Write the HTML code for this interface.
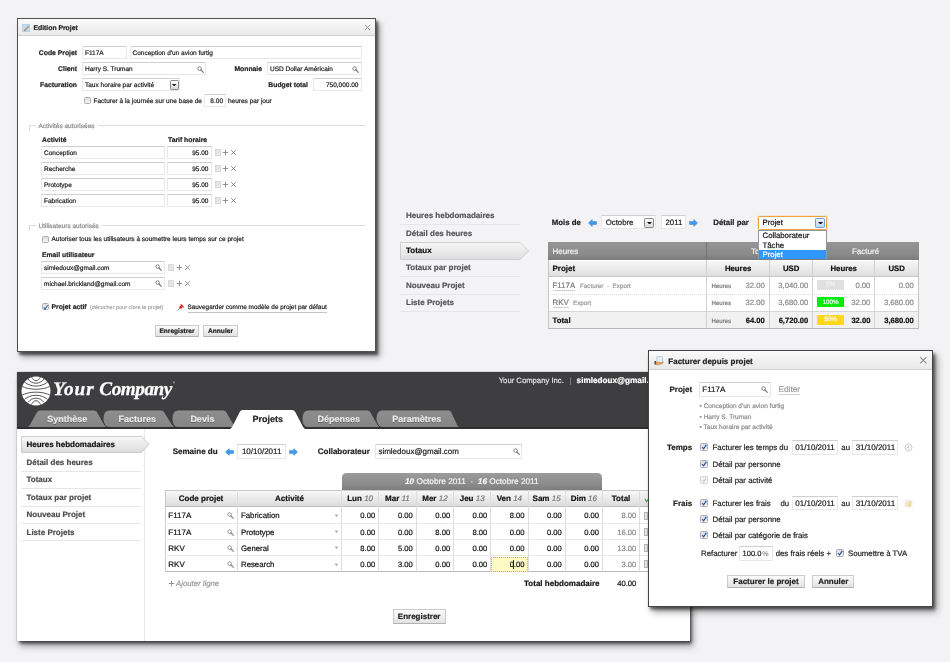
<!DOCTYPE html>
<html lang="fr">
<head>
<meta charset="utf-8">
<title>Your Company</title>
<style>
*{box-sizing:border-box;margin:0;padding:0}
html,body{width:950px;height:662px;overflow:hidden}
body{background:#f3f3f6;font-family:"Liberation Sans",Arial,sans-serif;font-size:6.5px;color:#222;position:relative;-webkit-font-smoothing:antialiased;text-rendering:geometricPrecision;-webkit-text-stroke:0.2px}
.abs{position:absolute}
.t{position:absolute;white-space:nowrap;line-height:1}
.b{font-weight:bold;font-size:6.8px}
.r{text-align:right}
.in{position:absolute;background:#fff;border:1px solid #e8e8e8;border-top-color:#d0d0d0;height:12px;line-height:10px;padding:0 2px;white-space:nowrap;font-size:6.5px;color:#1c1c1c;overflow:hidden}
.dlg{position:absolute;background:#fff;border:1px solid #444;box-shadow:2px 2.5px 2.5px rgba(0,0,0,.55),3.5px 4.5px 6px rgba(0,0,0,.35)}
.dlg .tb{position:absolute;left:0;right:0;top:0;height:16px;background:linear-gradient(#fafafa,#e9e9e9);border-bottom:1px solid #cfcfcf}
.cb{position:absolute;width:7px;height:7px;border:1px solid #a9adb3;background:linear-gradient(#dedee2,#f4f4f6);border-radius:1.5px}
.btn{position:absolute;height:12.5px;border:1px solid #cbcbcb;border-bottom-color:#b2b2b2;padding-top:1.1px;background:linear-gradient(#fbfbfb,#e2e2e2);font-weight:bold;font-size:6.6px;line-height:10px;text-align:center;color:#222;white-space:nowrap}
</style>
</head>
<body>
<div id="root" style="position:absolute;left:0;top:0;width:950px;height:662px;will-change:transform">
<div class="dlg" style="left:16.5px;top:18px;width:359.5px;height:334px;border-color:#505050"><div class="tb" style="height:17px"></div></div>
<svg class="abs" style="left:22px;top:24px" width="8" height="8" viewBox="0 0 8 8"><rect x="0.5" y="0.5" width="7" height="7" fill="#b9def8" stroke="#8fb9dd" stroke-width="0.8" stroke-dasharray="1.2 0.8"/><path d="M2.6 6.4L7 2" stroke="#c9925a" stroke-width="1.5"/><path d="M2 7L3.2 6.6L2.4 5.8Z" fill="#665"/></svg>
<div class="t b" style="top:23.80px;line-height:10px;left:33.50px;font-size:6.8px;color:#222">Edition Projet</div>
<svg class="abs" style="left:364.00px;top:23.80px" width="7" height="7" viewBox="0 0 8 8"><path d="M1 1L7 7M7 1L1 7" stroke="#8a8a8a" stroke-width="1" fill="none"/></svg>
<div class="t b" style="top:49.30px;line-height:10px;right:873.00px;text-align:right;">Code Projet</div>
<div class="in " style="left:82.00px;top:46.30px;width:44.50px;height:12.6px;line-height:10.6px;"><span style="position:relative;top:2.10px">F117A</span></div>
<div class="in " style="left:129.50px;top:46.30px;width:232.00px;height:12.6px;line-height:10.6px;"><span style="position:relative;top:2.10px">Conception d'un avion furtig</span></div>
<div class="t b" style="top:65.30px;line-height:10px;right:873.00px;text-align:right;">Client</div>
<div class="in " style="left:82.00px;top:62.30px;width:124.00px;height:12.6px;line-height:10.6px;"><span style="position:relative;top:2.10px">Harry S. Truman</span></div>
<svg class="abs" style="left:196.50px;top:65.80px" width="7" height="7" viewBox="0 0 7 7"><circle cx="2.6" cy="2.6" r="1.8" fill="none" stroke="#777" stroke-width="0.9"/><path d="M4 4L6.3 6.3" stroke="#777" stroke-width="1.2" stroke-linecap="round"/></svg>
<div class="t b" style="top:65.30px;line-height:10px;right:688.00px;text-align:right;">Monnaie</div>
<div class="in " style="left:267.00px;top:62.30px;width:94.50px;height:12.6px;line-height:10.6px;"><span style="position:relative;top:2.10px">USD Dollar Américain</span></div>
<svg class="abs" style="left:352.00px;top:65.80px" width="7" height="7" viewBox="0 0 7 7"><circle cx="2.6" cy="2.6" r="1.8" fill="none" stroke="#777" stroke-width="0.9"/><path d="M4 4L6.3 6.3" stroke="#777" stroke-width="1.2" stroke-linecap="round"/></svg>
<div class="t b" style="top:81.30px;line-height:10px;right:873.00px;text-align:right;">Facturation</div>
<div class="in " style="left:82.00px;top:78.30px;width:98.00px;height:12.6px;line-height:10.6px;"><span style="position:relative;top:2.10px">Taux horaire par activité</span></div>
<div class="abs" style="left:170.00px;top:80.20px;width:8.80px;height:9.40px;border:1px solid #8a8a8a;background:linear-gradient(#fdfdfd,#d9d9d9);border-radius:1.2px"></div><svg class="abs" style="left:172.20px;top:83.99px" width="4.40" height="2.42" viewBox="0 0 10 5.5"><path d="M0 0H10L5 5.5Z" fill="#1a1a1a"/></svg>
<div class="t b" style="top:81.30px;line-height:10px;right:642.00px;text-align:right;">Budget total</div>
<div class="in " style="left:312.50px;top:78.30px;width:49.00px;height:12.6px;line-height:10.6px;text-align:right"><span style="position:relative;top:2.10px">750,000.00</span></div>
<div class="cb" style="left:84.00px;top:97.00px;"></div>
<div class="t " style="top:96.80px;line-height:10px;left:93.50px;">Facturer à la journée sur une base de</div>
<div class="in " style="left:204.00px;top:94.00px;width:22.00px;height:12.6px;line-height:10.6px;text-align:right"><span style="position:relative;top:2.10px">8.00</span></div>
<div class="t " style="top:96.80px;line-height:10px;left:228.00px;">heures par jour</div>
<div class="abs" style="left:29px;top:125px;width:336px;height:6px;border-top:1px solid #dcdcdc;border-left:1px solid #dcdcdc"></div>
<div class="t " style="top:121.80px;line-height:10px;left:35.50px;background:#fff;padding:0 3px;color:#8a8a8a">Activités autorisées</div>
<div class="t b" style="top:136.30px;line-height:10px;left:42.00px;">Activité</div>
<div class="t b" style="top:136.30px;line-height:10px;left:168.00px;">Tarif horaire</div>
<div class="in " style="left:41.00px;top:146.10px;width:123.50px;height:12.6px;line-height:10.6px;"><span style="position:relative;top:1.50px">Conception</span></div>
<div class="in " style="left:167.00px;top:146.10px;width:44.50px;height:12.6px;line-height:10.6px;text-align:right"><span style="position:relative;top:1.50px">95.00</span></div>
<div class="abs" style="left:214.50px;top:148.60px;width:6px;height:7px;background:#e6e6e6;border:1px solid #d8d8d8"></div>
<svg class="abs" style="left:222.00px;top:148.60px" width="7" height="7" viewBox="0 0 7 7"><path d="M3.5 0.8V6.2M0.8 3.5H6.2" stroke="#888" stroke-width="0.9" fill="none"/></svg>
<svg class="abs" style="left:230.20px;top:148.60px" width="7" height="7" viewBox="0 0 7 7"><path d="M1.2 1.2L5.8 5.8M5.8 1.2L1.2 5.8" stroke="#888" stroke-width="0.9" fill="none"/></svg>
<div class="in " style="left:41.00px;top:162.10px;width:123.50px;height:12.6px;line-height:10.6px;"><span style="position:relative;top:1.50px">Recherche</span></div>
<div class="in " style="left:167.00px;top:162.10px;width:44.50px;height:12.6px;line-height:10.6px;text-align:right"><span style="position:relative;top:1.50px">95.00</span></div>
<div class="abs" style="left:214.50px;top:164.60px;width:6px;height:7px;background:#e6e6e6;border:1px solid #d8d8d8"></div>
<svg class="abs" style="left:222.00px;top:164.60px" width="7" height="7" viewBox="0 0 7 7"><path d="M3.5 0.8V6.2M0.8 3.5H6.2" stroke="#888" stroke-width="0.9" fill="none"/></svg>
<svg class="abs" style="left:230.20px;top:164.60px" width="7" height="7" viewBox="0 0 7 7"><path d="M1.2 1.2L5.8 5.8M5.8 1.2L1.2 5.8" stroke="#888" stroke-width="0.9" fill="none"/></svg>
<div class="in " style="left:41.00px;top:178.10px;width:123.50px;height:12.6px;line-height:10.6px;"><span style="position:relative;top:1.50px">Prototype</span></div>
<div class="in " style="left:167.00px;top:178.10px;width:44.50px;height:12.6px;line-height:10.6px;text-align:right"><span style="position:relative;top:1.50px">95.00</span></div>
<div class="abs" style="left:214.50px;top:180.60px;width:6px;height:7px;background:#e6e6e6;border:1px solid #d8d8d8"></div>
<svg class="abs" style="left:222.00px;top:180.60px" width="7" height="7" viewBox="0 0 7 7"><path d="M3.5 0.8V6.2M0.8 3.5H6.2" stroke="#888" stroke-width="0.9" fill="none"/></svg>
<svg class="abs" style="left:230.20px;top:180.60px" width="7" height="7" viewBox="0 0 7 7"><path d="M1.2 1.2L5.8 5.8M5.8 1.2L1.2 5.8" stroke="#888" stroke-width="0.9" fill="none"/></svg>
<div class="in " style="left:41.00px;top:194.10px;width:123.50px;height:12.6px;line-height:10.6px;"><span style="position:relative;top:1.50px">Fabrication</span></div>
<div class="in " style="left:167.00px;top:194.10px;width:44.50px;height:12.6px;line-height:10.6px;text-align:right"><span style="position:relative;top:1.50px">95.00</span></div>
<div class="abs" style="left:214.50px;top:196.60px;width:6px;height:7px;background:#e6e6e6;border:1px solid #d8d8d8"></div>
<svg class="abs" style="left:222.00px;top:196.60px" width="7" height="7" viewBox="0 0 7 7"><path d="M3.5 0.8V6.2M0.8 3.5H6.2" stroke="#888" stroke-width="0.9" fill="none"/></svg>
<svg class="abs" style="left:230.20px;top:196.60px" width="7" height="7" viewBox="0 0 7 7"><path d="M1.2 1.2L5.8 5.8M5.8 1.2L1.2 5.8" stroke="#888" stroke-width="0.9" fill="none"/></svg>
<div class="abs" style="left:29px;top:225px;width:336px;height:6px;border-top:1px solid #dcdcdc;border-left:1px solid #dcdcdc"></div>
<div class="t " style="top:221.60px;line-height:10px;left:35.50px;background:#fff;padding:0 3px;color:#8a8a8a">Utilisateurs autorisés</div>
<div class="cb" style="left:42.00px;top:235.50px;"></div>
<div class="t " style="top:235.30px;line-height:10px;left:51.50px;">Autoriser tous les utilisateurs à soumettre leurs temps sur ce projet</div>
<div class="t b" style="top:251.30px;line-height:10px;left:42.00px;">Email utilisateur</div>
<div class="in " style="left:41.00px;top:261.20px;width:123.50px;height:12.6px;line-height:10.6px;"><span style="position:relative;top:1.50px">simledoux@gmail.com</span></div>
<svg class="abs" style="left:155.00px;top:264.00px" width="7" height="7" viewBox="0 0 7 7"><circle cx="2.6" cy="2.6" r="1.8" fill="none" stroke="#777" stroke-width="0.9"/><path d="M4 4L6.3 6.3" stroke="#777" stroke-width="1.2" stroke-linecap="round"/></svg>
<div class="abs" style="left:168.00px;top:263.70px;width:6px;height:7px;background:#e6e6e6;border:1px solid #d8d8d8"></div>
<svg class="abs" style="left:175.50px;top:263.70px" width="7" height="7" viewBox="0 0 7 7"><path d="M3.5 0.8V6.2M0.8 3.5H6.2" stroke="#888" stroke-width="0.9" fill="none"/></svg>
<svg class="abs" style="left:183.70px;top:263.70px" width="7" height="7" viewBox="0 0 7 7"><path d="M1.2 1.2L5.8 5.8M5.8 1.2L1.2 5.8" stroke="#888" stroke-width="0.9" fill="none"/></svg>
<div class="in " style="left:41.00px;top:277.20px;width:123.50px;height:12.6px;line-height:10.6px;"><span style="position:relative;top:1.50px">michael.brickland@gmail.com</span></div>
<svg class="abs" style="left:155.00px;top:280.00px" width="7" height="7" viewBox="0 0 7 7"><circle cx="2.6" cy="2.6" r="1.8" fill="none" stroke="#777" stroke-width="0.9"/><path d="M4 4L6.3 6.3" stroke="#777" stroke-width="1.2" stroke-linecap="round"/></svg>
<div class="abs" style="left:168.00px;top:279.70px;width:6px;height:7px;background:#e6e6e6;border:1px solid #d8d8d8"></div>
<svg class="abs" style="left:175.50px;top:279.70px" width="7" height="7" viewBox="0 0 7 7"><path d="M3.5 0.8V6.2M0.8 3.5H6.2" stroke="#888" stroke-width="0.9" fill="none"/></svg>
<svg class="abs" style="left:183.70px;top:279.70px" width="7" height="7" viewBox="0 0 7 7"><path d="M1.2 1.2L5.8 5.8M5.8 1.2L1.2 5.8" stroke="#888" stroke-width="0.9" fill="none"/></svg>
<div class="cb" style="left:41.60px;top:303.10px;"><svg width="7" height="7" viewBox="0 0 7 7" style="position:absolute;left:-0.5px;top:-0.5px"><path d="M1.6 3.6L3 5L5.6 1.5" fill="none" stroke="#2a4f9a" stroke-width="1.1"/></svg></div>
<div class="t b" style="top:303.30px;line-height:10px;left:51.50px;">Projet actif</div>
<div class="t " style="top:303.30px;line-height:10px;left:90.00px;font-size:5.5px;color:#aaa">(décocher pour clore le projet)</div>
<svg class="abs" style="left:177px;top:303px" width="8" height="8" viewBox="0 0 8 8"><path d="M4 0.8L7.2 4L6.3 4.6L5.6 4.2L4.3 5.5L4.2 6.6L1.4 3.8L2.5 3.7L3.8 2.4L3.4 1.7Z" fill="#e0262a"/><path d="M2.9 5.1L0.6 7.4" stroke="#777" stroke-width="0.8"/></svg>
<div class="t " style="top:303.30px;line-height:10px;left:187.50px;font-size:6.4px;line-height:8px;margin-top:1px;border-bottom:1px solid #c4c4c4">Sauvegarder comme modèle de projet par défaut</div>
<div class="btn" style="left:155px;top:324.5px;width:44px">Enregistrer</div>
<div class="btn" style="left:203px;top:324.5px;width:35px">Annuler</div>

<div class="abs" style="left:402px;top:207px;width:128px;height:128px;background:#f4f4f6;box-shadow:0 0 5px 4px #f4f4f6"></div>
<div class="t b" style="top:211.10px;line-height:10px;left:406.00px;font-size:8px;color:#555">Heures hebdomadaires</div>
<div class="abs" style="left:400px;top:224.00px;width:120px;border-top:1px solid #e7e7e9"></div>
<div class="t b" style="top:228.50px;line-height:10px;left:406.00px;font-size:8px;color:#555">Détail des heures</div>
<svg class="abs" style="left:400px;top:241.5px" width="130" height="18" viewBox="0 0 130 18"><defs><linearGradient id="mg1" x1="0" y1="0" x2="0" y2="1"><stop offset="0" stop-color="#f7f7f7"/><stop offset="1" stop-color="#dedede"/></linearGradient></defs><path d="M0.5 0.5H120L128.5 9L120 17.5H0.5Z" fill="url(#mg1)" stroke="#c4c4c4" stroke-width="0.8"/></svg>
<div class="t b" style="top:245.90px;line-height:10px;left:406.00px;font-size:8px;color:#111">Totaux</div>
<div class="t b" style="top:263.40px;line-height:10px;left:406.00px;font-size:8px;color:#555">Totaux par projet</div>
<div class="abs" style="left:400px;top:276.30px;width:120px;border-top:1px solid #e7e7e9"></div>
<div class="t b" style="top:280.70px;line-height:10px;left:406.00px;font-size:8px;color:#555">Nouveau Projet</div>
<div class="abs" style="left:400px;top:293.60px;width:120px;border-top:1px solid #e7e7e9"></div>
<div class="t b" style="top:298.00px;line-height:10px;left:406.00px;font-size:8px;color:#555">Liste Projets</div>
<div class="abs" style="left:400px;top:310.90px;width:120px;border-top:1px solid #e7e7e9"></div>
<div class="abs" style="left:400px;top:224px;width:120px;border-top:1px solid #e7e7e9"></div>
<div class="t b" style="top:218.20px;line-height:10px;left:551.80px;font-size:7.8px;">Mois de</div>
<svg class="abs" style="left:587.70px;top:218.50px" width="9" height="8" viewBox="0 0 9 8"><path d="M0.5 4L4.2 0.6V2.6H8.5V5.4H4.2V7.4Z" fill="#3f9bea" stroke="#2a7fd0" stroke-width="0.5"/></svg>
<div class="in " style="left:600.70px;top:215.30px;width:55.50px;height:14px;line-height:12px;font-size:7.8px;padding-left:4px"><span style="position:relative;top:1.00px">Octobre</span></div>
<div class="abs" style="left:644.00px;top:217.60px;width:10.00px;height:10.00px;border:1px solid #8a8a8a;background:linear-gradient(#fdfdfd,#d9d9d9);border-radius:1.2px"></div><svg class="abs" style="left:646.50px;top:221.53px" width="5.00" height="2.75" viewBox="0 0 10 5.5"><path d="M0 0H10L5 5.5Z" fill="#1a1a1a"/></svg>
<div class="in " style="left:660.50px;top:215.30px;width:25.00px;height:14px;line-height:12px;font-size:7.8px;padding-left:4px"><span style="position:relative;top:1.00px">2011</span></div>
<svg class="abs" style="left:689.20px;top:218.50px" width="9" height="8" viewBox="0 0 9 8"><path d="M8.5 4L4.8 0.6V2.6H0.5V5.4H4.8V7.4Z" fill="#3f9bea" stroke="#2a7fd0" stroke-width="0.5"/></svg>
<div class="t b" style="top:218.20px;line-height:10px;left:713.30px;font-size:7.8px;">Détail par</div>
<div class="abs" style="left:548px;top:242px;width:370.5px;height:86.60000000000002px;background:#fff;border:1px solid #c9c9c9"></div>
<div class="abs" style="left:548px;top:242px;width:370.5px;height:18px;background:linear-gradient(#959595,#8a8a8a 70%,#7a7a7a)"></div>
<div class="abs" style="left:548px;top:260px;width:370.5px;height:16.5px;background:linear-gradient(#f6f6f6,#dfdfdf);border-bottom:1px solid #c6c6c6;border-top:1px solid #fff"></div>
<div class="abs" style="left:548px;top:311px;width:370.5px;height:17.600000000000023px;background:#f1f1f1;border-top:1px solid #d6d6d6;border-bottom:1px solid #bdbdbd"></div>
<div class="abs" style="left:548px;top:293.8px;width:370.5px;border-top:1px dotted #dcdcdc"></div>
<div class="abs" style="left:706.0px;top:242px;width:1px;height:18px;background:#747474"></div>
<div class="abs" style="left:812.1px;top:242px;width:1px;height:18px;background:#747474"></div>
<div class="abs" style="left:706.0px;top:260px;width:1px;height:68.60000000000002px;background:#d2d2d2"></div>
<div class="abs" style="left:769.2px;top:260px;width:1px;height:68.60000000000002px;background:#d2d2d2"></div>
<div class="abs" style="left:812.1px;top:260px;width:1px;height:68.60000000000002px;background:#d2d2d2"></div>
<div class="abs" style="left:874.3px;top:260px;width:1px;height:68.60000000000002px;background:#d2d2d2"></div>
<div class="t " style="top:246.50px;line-height:10px;left:552.50px;font-size:7.8px;color:#f2f2f2;font-size:8px">Heures</div>
<div class="t " style="top:246.50px;line-height:10px;left:706.50px;width:106.10px;text-align:center;font-size:7.8px;color:#f2f2f2;font-size:8px">Total</div>
<div class="t " style="top:246.50px;line-height:10px;left:812.60px;width:105.90px;text-align:center;font-size:7.8px;color:#f2f2f2;font-size:8px">Facturé</div>
<div class="t b" style="top:264.00px;line-height:10px;left:552.50px;font-size:7.8px;font-size:8px;color:#111">Projet</div>
<div class="t b" style="top:264.00px;line-height:10px;left:706.50px;width:63.20px;text-align:center;font-size:7.8px;font-size:7.8px;color:#111">Heures</div>
<div class="t b" style="top:264.00px;line-height:10px;left:769.70px;width:42.90px;text-align:center;font-size:7.8px;font-size:7.8px;color:#111">USD</div>
<div class="t b" style="top:264.00px;line-height:10px;left:812.60px;width:62.20px;text-align:center;font-size:7.8px;font-size:7.8px;color:#111">Heures</div>
<div class="t b" style="top:264.00px;line-height:10px;left:874.80px;width:43.70px;text-align:center;font-size:7.8px;font-size:7.8px;color:#111">USD</div>
<div class="abs" style="left:548px;top:260px;width:370.5px;height:68.60000000000002px;border:1px solid #c6c6c6;border-top:0;border-bottom-color:#b5b5b5"></div>
<div class="t " style="top:280.70px;line-height:10px;left:552.50px;font-size:7.8px;font-size:7.9px;color:#7d7d7d;border-bottom:1px solid #cfcfcf;line-height:9px">F117A</div>
<div class="t " style="top:281.90px;line-height:10px;left:580.00px;font-size:6.3px;color:#9a9a9a">Facturer &nbsp;·&nbsp; Export</div>
<div class="t " style="top:298.00px;line-height:10px;left:552.50px;font-size:7.8px;font-size:7.9px;color:#7d7d7d;border-bottom:1px solid #cfcfcf;line-height:9px">RKV</div>
<div class="t " style="top:299.20px;line-height:10px;left:573.00px;font-size:6.3px;color:#9a9a9a">Export</div>
<div class="t b" style="top:315.70px;line-height:10px;left:552.50px;font-size:7.8px;font-size:7.8px;color:#111">Total</div>
<div class="t " style="top:282.10px;line-height:10px;left:711.50px;font-size:6.1px;color:#777">Heures</div>
<div class="t " style="top:280.90px;line-height:10px;right:185.20px;text-align:right;color:#8b8b8b;font-size:7.7px;">32.00</div>
<div class="t " style="top:280.90px;line-height:10px;right:141.80px;text-align:right;color:#8b8b8b;font-size:7.7px;">3,040.00</div>
<div class="t " style="top:280.90px;line-height:10px;right:79.60px;text-align:right;color:#8b8b8b;font-size:7.7px;">0.00</div>
<div class="t " style="top:280.90px;line-height:10px;right:36.20px;text-align:right;color:#8b8b8b;font-size:7.7px;">0.00</div>
<div class="t " style="top:299.40px;line-height:10px;left:711.50px;font-size:6.1px;color:#777">Heures</div>
<div class="t " style="top:298.20px;line-height:10px;right:185.20px;text-align:right;color:#8b8b8b;font-size:7.7px;">32.00</div>
<div class="t " style="top:298.20px;line-height:10px;right:141.80px;text-align:right;color:#8b8b8b;font-size:7.7px;">3,680.00</div>
<div class="t " style="top:298.20px;line-height:10px;right:79.60px;text-align:right;color:#8b8b8b;font-size:7.7px;">32.00</div>
<div class="t " style="top:298.20px;line-height:10px;right:36.20px;text-align:right;color:#8b8b8b;font-size:7.7px;">3,680.00</div>
<div class="t " style="top:316.90px;line-height:10px;left:711.50px;font-size:6.1px;color:#777">Heures</div>
<div class="t " style="top:315.70px;line-height:10px;right:185.20px;text-align:right;color:#111;font-weight:bold;font-size:7.6px;">64.00</div>
<div class="t " style="top:315.70px;line-height:10px;right:141.80px;text-align:right;color:#111;font-weight:bold;font-size:7.6px;">6,720.00</div>
<div class="t " style="top:315.70px;line-height:10px;right:79.60px;text-align:right;color:#111;font-weight:bold;font-size:7.6px;">32.00</div>
<div class="t " style="top:315.70px;line-height:10px;right:36.20px;text-align:right;color:#111;font-weight:bold;font-size:7.6px;">3,680.00</div>
<div class="abs" style="left:817px;top:280.10px;width:27px;height:10px;background:#e0e0e0;border-radius:1px"></div>
<div class="t " style="top:280.40px;line-height:10px;left:817.00px;width:27.00px;text-align:center;font-size:6.3px;color:#f4f4f4">0%</div>
<div class="abs" style="left:817px;top:297.40px;width:27px;height:10px;background:#06ea0c;border-radius:1px"></div>
<div class="t " style="top:297.70px;line-height:10px;left:817.00px;width:27.00px;text-align:center;font-size:6.3px;color:#f4fff4">100%</div>
<div class="abs" style="left:817px;top:314.90px;width:27px;height:10px;background:#ffd81e;border-radius:1px"></div>
<div class="t " style="top:315.20px;line-height:10px;left:817.00px;width:27.00px;text-align:center;font-size:6.3px;color:#fffbe8">50%</div>
<div class="abs" style="left:758px;top:215.5px;width:69px;height:14.2px;background:#fff;border:1px solid #e9a440;border-radius:1.5px;box-shadow:0 0 1.5px #f0b860"></div>
<div class="t " style="top:218.30px;line-height:10px;left:762.50px;font-size:7.8px;color:#111">Projet</div>
<div class="abs" style="left:815.00px;top:217.80px;width:10.00px;height:10.00px;border:1px solid #6f9fd4;background:linear-gradient(#eaf4fd,#b9d9f5);border-radius:1.2px"></div><svg class="abs" style="left:817.50px;top:221.73px" width="5.00" height="2.75" viewBox="0 0 10 5.5"><path d="M0 0H10L5 5.5Z" fill="#1a1a1a"/></svg>
<div class="abs" style="left:758px;top:229.6px;width:69px;height:29.8px;background:#fff;border:1px solid #8f9aa8"></div>
<div class="abs" style="left:759px;top:249.7px;width:67px;height:9.2px;background:#3297fd"></div>
<div class="t " style="top:231.10px;line-height:10px;left:762.50px;font-size:7.8px;color:#111">Collaborateur</div>
<div class="t " style="top:240.60px;line-height:10px;left:762.50px;font-size:7.8px;color:#111">Tâche</div>
<div class="t " style="top:250.10px;line-height:10px;left:762.50px;font-size:7.8px;color:#fff">Projet</div>

<div class="abs" style="left:16.5px;top:372.4px;width:673.0px;height:268.6px;background:#fff;box-shadow:1.5px 2.5px 3px rgba(0,0,0,.6),3px 5px 7px rgba(0,0,0,.38),0 0 1px rgba(0,0,0,.5)"></div>
<div class="abs" style="left:16.5px;top:372.4px;width:673.0px;height:56.10000000000002px;background:#3e3e40"></div>
<svg class="abs" style="left:20.6px;top:375.5px" width="30" height="30" viewBox="0 0 30 30">
<defs><clipPath id="lc"><circle cx="15" cy="15" r="14.5"/></clipPath></defs>
<circle cx="15" cy="15" r="14.5" fill="#fff"/>
<g clip-path="url(#lc)" fill="none" stroke="#505052" stroke-width="0.95">
<path d="M10.2 0.5C12.89 6.10 17.11 6.10 19.8 0.5"/><path d="M6.9 3C11.44 8.67 18.56 8.67 23.1 3"/><path d="M3.2 5.9C9.81 11.50 20.19 11.50 26.8 5.9"/><path d="M0 9.9C8.40 14.37 21.60 14.37 30 9.9"/>
<path d="M10.2 28.9C12.89 23.30 17.11 23.30 19.8 28.9"/><path d="M6.9 26.4C11.44 20.73 18.56 20.73 23.1 26.4"/><path d="M3.2 23.5C9.81 17.90 20.19 17.90 26.8 23.5"/><path d="M0 19.5C8.40 15.03 21.60 15.03 30 19.5"/>
</g></svg>
<div class="t" style="left:53.2px;top:377.2px;line-height:26px;font-family:'Liberation Serif','DejaVu Serif',serif;font-style:italic;font-weight:bold;font-size:19.2px;color:#fff;-webkit-text-stroke:0.3px #fff;letter-spacing:1.1px">Your</div>
<div class="t" style="left:99.3px;top:377.2px;line-height:26px;font-family:'Liberation Serif','DejaVu Serif',serif;font-style:italic;font-weight:bold;font-size:19.2px;color:#fff;-webkit-text-stroke:0.3px #fff;letter-spacing:-0.45px">Company<span style="font-size:5px;vertical-align:top;position:relative;top:-5px;left:1px;font-weight:normal;-webkit-text-stroke:0">°</span></div>
<div class="t " style="top:375.70px;line-height:10px;left:498.70px;font-size:7.7px;color:#e4e4e4">Your Company Inc.</div>
<div class="t " style="top:375.70px;line-height:10px;left:569.50px;font-size:7.7px;color:#8a8a8a">|</div>
<div class="t b" style="top:375.70px;line-height:10px;left:576.60px;font-size:8.2px;color:#fff">simledoux@gmail.com</div>
<svg class="abs" style="left:371.80px;top:410.10px;overflow:visible" width="90.80" height="17.50" viewBox="0 0 90.80 17.50"><defs><linearGradient id="tg375" x1="0" y1="0" x2="0" y2="1"><stop offset="0" stop-color="#9a9a9a"/><stop offset="0.12" stop-color="#8c8c8c"/><stop offset="1" stop-color="#868686"/></linearGradient></defs><path d="M10.00 17.50 C6.20 17.50 4.00 13.65 4.00 8.75 C4.00 3.85 6.20 0 10.50 0 L76.50 0 Q78.70 0 79.72 2.2 L85.64 15.00 Q87.10 17.50 89.30 17.50 Z" fill="url(#tg375)" stroke="#3a3a3c" stroke-width="1"/></svg>
<div class="t b" style="left:366.75px;width:100px;text-align:center;top:414.10px;line-height:10px;font-size:9px;color:#ebebeb;text-shadow:0 0.6px 0.5px rgba(0,0,0,.35);">Paramètres</div>
<svg class="abs" style="left:297.90px;top:410.10px;overflow:visible" width="85.40" height="17.50" viewBox="0 0 85.40 17.50"><defs><linearGradient id="tg301" x1="0" y1="0" x2="0" y2="1"><stop offset="0" stop-color="#9a9a9a"/><stop offset="0.12" stop-color="#8c8c8c"/><stop offset="1" stop-color="#868686"/></linearGradient></defs><path d="M10.00 17.50 C6.20 17.50 4.00 13.65 4.00 8.75 C4.00 3.85 6.20 0 10.50 0 L69.40 0 Q71.60 0 72.83 2.2 L80.00 15.00 Q81.70 17.50 83.90 17.50 Z" fill="url(#tg301)" stroke="#3a3a3c" stroke-width="1"/></svg>
<div class="t b" style="left:288.75px;width:100px;text-align:center;top:414.10px;line-height:10px;font-size:9px;color:#ebebeb;text-shadow:0 0.6px 0.5px rgba(0,0,0,.35);">Dépenses</div>
<svg class="abs" style="left:168.30px;top:410.10px;overflow:visible" width="71.70" height="17.50" viewBox="0 0 71.70 17.50"><defs><linearGradient id="tg172" x1="0" y1="0" x2="0" y2="1"><stop offset="0" stop-color="#9a9a9a"/><stop offset="0.12" stop-color="#8c8c8c"/><stop offset="1" stop-color="#868686"/></linearGradient></defs><path d="M10.00 17.50 C6.20 17.50 4.00 13.65 4.00 8.75 C4.00 3.85 6.20 0 10.50 0 L55.30 0 Q57.50 0 58.78 2.2 L66.24 15.00 Q68.00 17.50 70.20 17.50 Z" fill="url(#tg172)" stroke="#3a3a3c" stroke-width="1"/></svg>
<div class="t b" style="left:152.40px;width:100px;text-align:center;top:414.10px;line-height:10px;font-size:9px;color:#ebebeb;text-shadow:0 0.6px 0.5px rgba(0,0,0,.35);">Devis</div>
<svg class="abs" style="left:99.30px;top:410.10px;overflow:visible" width="79.20" height="17.50" viewBox="0 0 79.20 17.50"><defs><linearGradient id="tg103" x1="0" y1="0" x2="0" y2="1"><stop offset="0" stop-color="#9a9a9a"/><stop offset="0.12" stop-color="#8c8c8c"/><stop offset="1" stop-color="#868686"/></linearGradient></defs><path d="M10.00 17.50 C6.20 17.50 4.00 13.65 4.00 8.75 C4.00 3.85 6.20 0 10.50 0 L62.00 0 Q64.20 0 65.58 2.2 L73.63 15.00 Q75.50 17.50 77.70 17.50 Z" fill="url(#tg103)" stroke="#3a3a3c" stroke-width="1"/></svg>
<div class="t b" style="left:87.25px;width:100px;text-align:center;top:414.10px;line-height:10px;font-size:9px;color:#ebebeb;text-shadow:0 0.6px 0.5px rgba(0,0,0,.35);">Factures</div>
<svg class="abs" style="left:24.30px;top:410.10px;overflow:visible" width="86.20" height="17.50" viewBox="0 0 86.20 17.50"><defs><linearGradient id="tg28" x1="0" y1="0" x2="0" y2="1"><stop offset="0" stop-color="#9a9a9a"/><stop offset="0.12" stop-color="#8c8c8c"/><stop offset="1" stop-color="#868686"/></linearGradient></defs><path d="M1.50 17.50 Q3.70 17.50 5.39 15.00 L12.48 2.2 Q13.70 0 15.90 0 L70.10 0 Q72.30 0 73.54 2.2 L80.79 15.00 Q82.50 17.50 84.70 17.50 Z" fill="url(#tg28)" stroke="#3a3a3c" stroke-width="1"/></svg>
<div class="t b" style="left:17.30px;width:100px;text-align:center;top:414.10px;line-height:10px;font-size:9px;color:#ebebeb;text-shadow:0 0.6px 0.5px rgba(0,0,0,.35);">Synthèse</div>
<div class="abs" style="left:16.5px;top:427.4px;width:673.0px;height:1.8px;background:#303032"></div>
<svg class="abs" style="left:227.30px;top:410.10px;overflow:visible" width="81.20" height="19.30" viewBox="0 0 81.20 19.30"><path d="M1.50 19.30 Q3.70 19.30 5.26 16.80 L12.59 2.2 Q13.70 0 15.90 0 L65.10 0 Q67.30 0 68.43 2.2 L75.92 16.80 Q77.50 19.30 79.70 19.30 Z" fill="#ffffff"/></svg>
<div class="t b" style="left:217.80px;width:100px;text-align:center;top:414.10px;line-height:10px;font-size:9px;color:#222;">Projets</div>
<div class="abs" style="left:143.5px;top:429px;width:1px;height:212px;background:#e9e9e9"></div>
<svg class="abs" style="left:21px;top:436.3px" width="130" height="17" viewBox="0 0 130 17"><defs><linearGradient id="mg2" x1="0" y1="0" x2="0" y2="1"><stop offset="0" stop-color="#f8f8f8"/><stop offset="1" stop-color="#dcdcdc"/></linearGradient></defs><path d="M0.5 0.5H120.5L128 8.5L120.5 16.5H0.5Z" fill="url(#mg2)" stroke="#c2c2c2" stroke-width="0.8"/></svg>
<div class="t b" style="top:440.30px;line-height:10px;left:26.50px;font-size:8px;color:#111">Heures hebdomadaires</div>
<div class="t b" style="top:457.75px;line-height:10px;left:26.50px;font-size:8px;color:#4c4c4c">Détail des heures</div>
<div class="abs" style="left:21px;top:470.65px;width:120px;border-top:1px solid #e6e6e6"></div>
<div class="t b" style="top:475.20px;line-height:10px;left:26.50px;font-size:8px;color:#4c4c4c">Totaux</div>
<div class="abs" style="left:21px;top:488.10px;width:120px;border-top:1px solid #e6e6e6"></div>
<div class="t b" style="top:492.65px;line-height:10px;left:26.50px;font-size:8px;color:#4c4c4c">Totaux par projet</div>
<div class="abs" style="left:21px;top:505.55px;width:120px;border-top:1px solid #e6e6e6"></div>
<div class="t b" style="top:510.10px;line-height:10px;left:26.50px;font-size:8px;color:#4c4c4c">Nouveau Projet</div>
<div class="abs" style="left:21px;top:523.00px;width:120px;border-top:1px solid #e6e6e6"></div>
<div class="t b" style="top:527.55px;line-height:10px;left:26.50px;font-size:8px;color:#4c4c4c">Liste Projets</div>
<div class="abs" style="left:21px;top:540.45px;width:120px;border-top:1px solid #e6e6e6"></div>
<div class="t b" style="top:447.30px;line-height:10px;left:172.70px;font-size:8px;">Semaine du</div>
<svg class="abs" style="left:225.10px;top:447.60px" width="9" height="8" viewBox="0 0 9 8"><path d="M0.5 4L4.2 0.6V2.6H8.5V5.4H4.2V7.4Z" fill="#3f9bea" stroke="#2a7fd0" stroke-width="0.5"/></svg>
<div class="in " style="left:237.40px;top:444.20px;width:48.50px;height:14.5px;line-height:12.5px;font-size:8px;text-align:center;padding:0"><span style="position:relative;top:1.00px">10/10/2011</span></div>
<svg class="abs" style="left:289.30px;top:447.60px" width="9" height="8" viewBox="0 0 9 8"><path d="M8.5 4L4.8 0.6V2.6H0.5V5.4H4.8V7.4Z" fill="#3f9bea" stroke="#2a7fd0" stroke-width="0.5"/></svg>
<div class="t b" style="top:447.30px;line-height:10px;left:317.80px;font-size:8px;">Collaborateur</div>
<div class="in " style="left:375.40px;top:444.20px;width:147.00px;height:14.5px;line-height:12.5px;font-size:8px;padding-left:2px"><span style="position:relative;top:1.00px">simledoux@gmail.com</span></div>
<svg class="abs" style="left:512.50px;top:448.30px" width="7" height="7" viewBox="0 0 7 7"><circle cx="2.6" cy="2.6" r="1.8" fill="none" stroke="#777" stroke-width="0.9"/><path d="M4 4L6.3 6.3" stroke="#777" stroke-width="1.2" stroke-linecap="round"/></svg>
<div class="abs" style="left:341.7px;top:473px;width:260.3px;height:17.6px;border-radius:4.5px 4.5px 0 0;background:linear-gradient(#9b9b9b,#8c8c8c 60%,#7b7b7b)"></div>
<div class="t " style="top:476.90px;line-height:10px;left:341.70px;width:260.30px;text-align:center;font-size:8px;color:#f4f4f4;font-size:8.25px"><b><i>10</i></b> Octobre 2011 &nbsp;·&nbsp; <b><i>16</i></b> Octobre 2011</div>
<div class="abs" style="left:164.7px;top:490.4px;width:495.3px;height:81.70000000000005px;background:#fff;border:1px solid #cfcfcf;border-bottom-color:#b9b9b9"></div>
<div class="abs" style="left:164.7px;top:490.4px;width:495.3px;height:16.600000000000023px;background:linear-gradient(#f7f7f7,#dddddd);border:1px solid #c9c9c9;border-bottom-color:#bdbdbd"></div>
<div class="abs" style="left:164.7px;top:523.1px;width:495.3px;height:1px;background:#e9e9e9"></div>
<div class="abs" style="left:164.7px;top:539.3px;width:495.3px;height:1px;background:#e9e9e9"></div>
<div class="abs" style="left:164.7px;top:555.4px;width:495.3px;height:1px;background:#e9e9e9"></div>
<div class="abs" style="left:236.9px;top:490.4px;width:1px;height:81.70000000000005px;background:#dcdcdc"></div>
<div class="abs" style="left:341.2px;top:490.4px;width:1px;height:81.70000000000005px;background:#dcdcdc"></div>
<div class="abs" style="left:378.1px;top:490.4px;width:1px;height:81.70000000000005px;background:#dcdcdc"></div>
<div class="abs" style="left:415.8px;top:490.4px;width:1px;height:81.70000000000005px;background:#dcdcdc"></div>
<div class="abs" style="left:453.1px;top:490.4px;width:1px;height:81.70000000000005px;background:#dcdcdc"></div>
<div class="abs" style="left:490.3px;top:490.4px;width:1px;height:81.70000000000005px;background:#dcdcdc"></div>
<div class="abs" style="left:527.5px;top:490.4px;width:1px;height:81.70000000000005px;background:#dcdcdc"></div>
<div class="abs" style="left:564.7px;top:490.4px;width:1px;height:81.70000000000005px;background:#dcdcdc"></div>
<div class="abs" style="left:602.0px;top:490.4px;width:1px;height:81.70000000000005px;background:#dcdcdc"></div>
<div class="abs" style="left:639.2px;top:490.4px;width:1px;height:81.70000000000005px;background:#dcdcdc"></div>
<div class="t b" style="top:493.90px;line-height:10px;left:164.70px;width:72.70px;text-align:center;font-size:8px;color:#111">Code projet</div>
<div class="t b" style="top:493.90px;line-height:10px;left:237.40px;width:104.30px;text-align:center;font-size:8px;color:#111">Activité</div>
<div class="t " style="top:493.90px;line-height:10px;left:341.70px;width:36.90px;text-align:center;font-size:8px;color:#111"><b>Lun</b> <i style="color:#777">10</i></div>
<div class="t " style="top:493.90px;line-height:10px;left:378.60px;width:37.70px;text-align:center;font-size:8px;color:#111"><b>Mar</b> <i style="color:#777">11</i></div>
<div class="t " style="top:493.90px;line-height:10px;left:416.30px;width:37.30px;text-align:center;font-size:8px;color:#111"><b>Mer</b> <i style="color:#777">12</i></div>
<div class="t " style="top:493.90px;line-height:10px;left:453.60px;width:37.20px;text-align:center;font-size:8px;color:#111"><b>Jeu</b> <i style="color:#777">13</i></div>
<div class="t " style="top:493.90px;line-height:10px;left:490.80px;width:37.20px;text-align:center;font-size:8px;color:#111"><b>Ven</b> <i style="color:#777">14</i></div>
<div class="t " style="top:493.90px;line-height:10px;left:528.00px;width:37.20px;text-align:center;font-size:8px;color:#111"><b>Sam</b> <i style="color:#777">15</i></div>
<div class="t " style="top:493.90px;line-height:10px;left:565.20px;width:37.30px;text-align:center;font-size:8px;color:#111"><b>Dim</b> <i style="color:#777">16</i></div>
<div class="t b" style="top:493.90px;line-height:10px;left:602.50px;width:37.20px;text-align:center;font-size:8px;color:#111">Total</div>
<svg class="abs" style="left:643.5px;top:496.5px" width="6" height="6" viewBox="0 0 6 6"><path d="M0.8 2L2.6 4.6L6 0" fill="none" stroke="#2fae2f" stroke-width="1.1"/></svg>
<div class="t " style="top:511.20px;line-height:10px;left:168.30px;font-size:8px;color:#111">F117A</div>
<svg class="abs" style="left:227.00px;top:512.30px" width="7" height="7" viewBox="0 0 7 7"><circle cx="2.6" cy="2.6" r="1.8" fill="none" stroke="#888" stroke-width="0.9"/><path d="M4 4L6.3 6.3" stroke="#888" stroke-width="1.2" stroke-linecap="round"/></svg>
<div class="t " style="top:511.20px;line-height:10px;left:241.00px;font-size:7.8px;color:#111">Fabrication</div>
<svg class="abs" style="left:333.6px;top:513.90px" width="5" height="4" viewBox="0 0 5 4"><path d="M0.6 0.6H4.4L2.5 3.4Z" fill="#b4b4b4"/></svg>
<div class="t " style="top:511.20px;line-height:10px;right:574.90px;text-align:right;font-size:7.6px;color:#111">0.00</div>
<div class="t " style="top:511.20px;line-height:10px;right:537.20px;text-align:right;font-size:7.6px;color:#111">0.00</div>
<div class="t " style="top:511.20px;line-height:10px;right:499.90px;text-align:right;font-size:7.6px;color:#111">0.00</div>
<div class="t " style="top:511.20px;line-height:10px;right:462.70px;text-align:right;font-size:7.6px;color:#111">0.00</div>
<div class="t " style="top:511.20px;line-height:10px;right:425.50px;text-align:right;font-size:7.6px;color:#111">8.00</div>
<div class="t " style="top:511.20px;line-height:10px;right:388.30px;text-align:right;font-size:7.6px;color:#111">0.00</div>
<div class="t " style="top:511.20px;line-height:10px;right:351.00px;text-align:right;font-size:7.6px;color:#111">0.00</div>
<div class="t " style="top:511.20px;line-height:10px;right:313.80px;text-align:right;font-size:7.6px;color:#8a8a8a">8.00</div>
<div class="abs" style="left:644px;top:511.50px;width:4px;height:8px;background:#e6e6e6;border:1px solid #b5b5b5"></div>
<div class="t " style="top:527.60px;line-height:10px;left:168.30px;font-size:8px;color:#111">F117A</div>
<svg class="abs" style="left:227.00px;top:528.70px" width="7" height="7" viewBox="0 0 7 7"><circle cx="2.6" cy="2.6" r="1.8" fill="none" stroke="#888" stroke-width="0.9"/><path d="M4 4L6.3 6.3" stroke="#888" stroke-width="1.2" stroke-linecap="round"/></svg>
<div class="t " style="top:527.60px;line-height:10px;left:241.00px;font-size:7.8px;color:#111">Prototype</div>
<svg class="abs" style="left:333.6px;top:530.30px" width="5" height="4" viewBox="0 0 5 4"><path d="M0.6 0.6H4.4L2.5 3.4Z" fill="#b4b4b4"/></svg>
<div class="t " style="top:527.60px;line-height:10px;right:574.90px;text-align:right;font-size:7.6px;color:#111">0.00</div>
<div class="t " style="top:527.60px;line-height:10px;right:537.20px;text-align:right;font-size:7.6px;color:#111">0.00</div>
<div class="t " style="top:527.60px;line-height:10px;right:499.90px;text-align:right;font-size:7.6px;color:#111">8.00</div>
<div class="t " style="top:527.60px;line-height:10px;right:462.70px;text-align:right;font-size:7.6px;color:#111">8.00</div>
<div class="t " style="top:527.60px;line-height:10px;right:425.50px;text-align:right;font-size:7.6px;color:#111">0.00</div>
<div class="t " style="top:527.60px;line-height:10px;right:388.30px;text-align:right;font-size:7.6px;color:#111">0.00</div>
<div class="t " style="top:527.60px;line-height:10px;right:351.00px;text-align:right;font-size:7.6px;color:#111">0.00</div>
<div class="t " style="top:527.60px;line-height:10px;right:313.80px;text-align:right;font-size:7.6px;color:#8a8a8a">16.00</div>
<div class="abs" style="left:644px;top:527.90px;width:4px;height:8px;background:#e6e6e6;border:1px solid #b5b5b5"></div>
<div class="t " style="top:543.75px;line-height:10px;left:168.30px;font-size:8px;color:#111">RKV</div>
<svg class="abs" style="left:227.00px;top:544.85px" width="7" height="7" viewBox="0 0 7 7"><circle cx="2.6" cy="2.6" r="1.8" fill="none" stroke="#888" stroke-width="0.9"/><path d="M4 4L6.3 6.3" stroke="#888" stroke-width="1.2" stroke-linecap="round"/></svg>
<div class="t " style="top:543.75px;line-height:10px;left:241.00px;font-size:7.8px;color:#111">General</div>
<svg class="abs" style="left:333.6px;top:546.45px" width="5" height="4" viewBox="0 0 5 4"><path d="M0.6 0.6H4.4L2.5 3.4Z" fill="#b4b4b4"/></svg>
<div class="t " style="top:543.75px;line-height:10px;right:574.90px;text-align:right;font-size:7.6px;color:#111">8.00</div>
<div class="t " style="top:543.75px;line-height:10px;right:537.20px;text-align:right;font-size:7.6px;color:#111">5.00</div>
<div class="t " style="top:543.75px;line-height:10px;right:499.90px;text-align:right;font-size:7.6px;color:#111">0.00</div>
<div class="t " style="top:543.75px;line-height:10px;right:462.70px;text-align:right;font-size:7.6px;color:#111">0.00</div>
<div class="t " style="top:543.75px;line-height:10px;right:425.50px;text-align:right;font-size:7.6px;color:#111">0.00</div>
<div class="t " style="top:543.75px;line-height:10px;right:388.30px;text-align:right;font-size:7.6px;color:#111">0.00</div>
<div class="t " style="top:543.75px;line-height:10px;right:351.00px;text-align:right;font-size:7.6px;color:#111">0.00</div>
<div class="t " style="top:543.75px;line-height:10px;right:313.80px;text-align:right;font-size:7.6px;color:#8a8a8a">13.00</div>
<div class="abs" style="left:644px;top:544.05px;width:4px;height:8px;background:#e6e6e6;border:1px solid #b5b5b5"></div>
<div class="t " style="top:559.90px;line-height:10px;left:168.30px;font-size:8px;color:#111">RKV</div>
<svg class="abs" style="left:227.00px;top:561.00px" width="7" height="7" viewBox="0 0 7 7"><circle cx="2.6" cy="2.6" r="1.8" fill="none" stroke="#888" stroke-width="0.9"/><path d="M4 4L6.3 6.3" stroke="#888" stroke-width="1.2" stroke-linecap="round"/></svg>
<div class="t " style="top:559.90px;line-height:10px;left:241.00px;font-size:7.8px;color:#111">Research</div>
<svg class="abs" style="left:333.6px;top:562.60px" width="5" height="4" viewBox="0 0 5 4"><path d="M0.6 0.6H4.4L2.5 3.4Z" fill="#b4b4b4"/></svg>
<div class="abs" style="left:491.3px;top:557.10px;width:36.6px;height:14.60px;background:#fff9c8;border:1px dotted #d9a93a"></div>
<div class="abs" style="left:512.6px;top:559.70px;width:0.8px;height:9px;background:#333"></div>
<div class="t " style="top:559.90px;line-height:10px;right:574.90px;text-align:right;font-size:7.6px;color:#111">0.00</div>
<div class="t " style="top:559.90px;line-height:10px;right:537.20px;text-align:right;font-size:7.6px;color:#111">3.00</div>
<div class="t " style="top:559.90px;line-height:10px;right:499.90px;text-align:right;font-size:7.6px;color:#111">0.00</div>
<div class="t " style="top:559.90px;line-height:10px;right:462.70px;text-align:right;font-size:7.6px;color:#111">0.00</div>
<div class="t " style="top:559.90px;line-height:10px;right:425.50px;text-align:right;font-size:7.6px;color:#111">0.00</div>
<div class="t " style="top:559.90px;line-height:10px;right:388.30px;text-align:right;font-size:7.6px;color:#111">0.00</div>
<div class="t " style="top:559.90px;line-height:10px;right:351.00px;text-align:right;font-size:7.6px;color:#111">0.00</div>
<div class="t " style="top:559.90px;line-height:10px;right:313.80px;text-align:right;font-size:7.6px;color:#8a8a8a">3.00</div>
<div class="abs" style="left:644px;top:560.20px;width:4px;height:8px;background:#e6e6e6;border:1px solid #b5b5b5"></div>
<svg class="abs" style="left:168px;top:579.5px" width="7" height="7" viewBox="0 0 7 7"><path d="M3.5 0.8V6.2M0.8 3.5H6.2" stroke="#888" stroke-width="0.9" fill="none"/></svg>
<div class="t " style="top:578.70px;line-height:10px;left:176.00px;font-size:7.75px;color:#999"><i>Ajouter ligne</i></div>
<div class="t b" style="top:578.70px;line-height:10px;right:350.50px;text-align:right;font-size:8px;color:#111">Total hebdomadaire</div>
<div class="t " style="top:578.70px;line-height:10px;right:313.80px;text-align:right;font-size:7.6px;color:#111">40.00</div>
<div class="btn" style="left:392.5px;top:609.3px;width:53.3px;height:14.6px;line-height:12.6px;font-size:8px">Enregistrer</div>

<div class="dlg" style="left:648px;top:350px;width:285px;height:257px;box-shadow:2px 2.5px 3px rgba(0,0,0,.55),4px 5px 7px rgba(0,0,0,.38)"><div class="tb" style="height:19px"></div></div>
<svg class="abs" style="left:653.5px;top:355.5px" width="10" height="10" viewBox="0 0 10 10"><rect x="3" y="0.8" width="5.5" height="6" fill="#e9f1f8" stroke="#9db4c8" stroke-width="0.6"/><path d="M0.5 5H2V8.5H0.5Z" fill="#445"/><path d="M2 6C4 5.5 6 7.5 9.5 5.8C9 8 6 9.5 2 8.5Z" fill="#e8a85a" stroke="#b97a33" stroke-width="0.4"/></svg>
<div class="t b" style="top:356.60px;line-height:10px;left:668.30px;font-size:8px;color:#222">Facturer depuis projet</div>
<svg class="abs" style="left:918.95px;top:356.35px" width="8.5" height="8.5" viewBox="0 0 8 8"><path d="M1 1L7 7M7 1L1 7" stroke="#8a8a8a" stroke-width="1" fill="none"/></svg>
<div class="t b" style="top:385.30px;line-height:10px;right:257.80px;text-align:right;font-size:8px;">Projet</div>
<div class="in " style="left:699.30px;top:382.00px;width:71.50px;height:14.8px;line-height:12.8px;font-size:8px;padding-left:2px"><span style="position:relative;top:1.00px">F117A</span></div>
<svg class="abs" style="left:761.00px;top:386.00px" width="7" height="7" viewBox="0 0 7 7"><circle cx="2.6" cy="2.6" r="1.8" fill="none" stroke="#777" stroke-width="0.9"/><path d="M4 4L6.3 6.3" stroke="#777" stroke-width="1.2" stroke-linecap="round"/></svg>
<div class="t " style="top:385.30px;line-height:10px;left:778.40px;font-size:8px;color:#9a9a9a;border-bottom:1px solid #d0d0d0;line-height:9px;font-size:8.3px">Editer</div>
<div class="t " style="top:402.20px;line-height:10px;left:699.60px;font-size:6.5px;color:#8a8a8a">• Conception d'un avion furtig</div>
<div class="t " style="top:412.50px;line-height:10px;left:699.60px;font-size:6.5px;color:#8a8a8a">• Harry S. Truman</div>
<div class="t " style="top:422.70px;line-height:10px;left:699.60px;font-size:6.5px;color:#8a8a8a">• Taux horaire par activité</div>
<div class="t b" style="top:443.30px;line-height:10px;right:257.80px;text-align:right;font-size:8px;">Temps</div>
<div class="cb" style="left:700.20px;top:443.30px;width:8px;height:8px;"><svg width="8" height="8" viewBox="0 0 8 8" style="position:absolute;left:-1px;top:-1px"><path d="M2 4.2L3.6 5.9L6.3 1.9" fill="none" stroke="#2a4f9a" stroke-width="1.2"/></svg></div>
<div class="t " style="top:443.30px;line-height:10px;left:712.60px;font-size:7.8px;">Facturer les temps du</div>
<div class="in " style="left:792.00px;top:440.20px;width:46.20px;height:14.8px;line-height:12.8px;font-size:8px;text-align:center;padding:0"><span style="position:relative;top:1.00px">01/10/2011</span></div>
<div class="t " style="top:443.30px;line-height:10px;left:841.30px;font-size:7.8px;">au</div>
<div class="in " style="left:852.30px;top:440.20px;width:46.20px;height:14.8px;line-height:12.8px;font-size:8px;text-align:center;padding:0"><span style="position:relative;top:1.00px">31/10/2011</span></div>
<svg class="abs" style="left:904px;top:443px" width="9" height="9" viewBox="0 0 9 9"><circle cx="4.5" cy="4.5" r="3.6" fill="#f4f4f4" stroke="#c9c9c9" stroke-width="0.8"/><path d="M4.5 2.5V4.6H2.8" fill="none" stroke="#bbb" stroke-width="0.7"/></svg>
<div class="cb" style="left:700.20px;top:459.70px;width:8px;height:8px;"><svg width="8" height="8" viewBox="0 0 8 8" style="position:absolute;left:-1px;top:-1px"><path d="M2 4.2L3.6 5.9L6.3 1.9" fill="none" stroke="#2a4f9a" stroke-width="1.2"/></svg></div>
<div class="t " style="top:459.70px;line-height:10px;left:712.60px;font-size:7.8px;">Détail par personne</div>
<div class="cb" style="left:700.20px;top:476.00px;width:8px;height:8px;opacity:.5;"><svg width="8" height="8" viewBox="0 0 8 8" style="position:absolute;left:-1px;top:-1px"><path d="M2 4.2L3.6 5.9L6.3 1.9" fill="none" stroke="#999" stroke-width="1.2"/></svg></div>
<div class="t " style="top:476.00px;line-height:10px;left:712.60px;font-size:7.8px;">Détail par activité</div>
<div class="t b" style="top:498.70px;line-height:10px;right:257.80px;text-align:right;font-size:8px;">Frais</div>
<div class="cb" style="left:700.20px;top:498.70px;width:8px;height:8px;"><svg width="8" height="8" viewBox="0 0 8 8" style="position:absolute;left:-1px;top:-1px"><path d="M2 4.2L3.6 5.9L6.3 1.9" fill="none" stroke="#2a4f9a" stroke-width="1.2"/></svg></div>
<div class="t " style="top:498.70px;line-height:10px;left:712.60px;font-size:7.8px;">Facturer les frais</div>
<div class="t " style="top:498.70px;line-height:10px;left:780.50px;font-size:7.8px;">du</div>
<div class="in " style="left:792.00px;top:495.60px;width:46.20px;height:14.8px;line-height:12.8px;font-size:8px;text-align:center;padding:0"><span style="position:relative;top:1.00px">01/10/2011</span></div>
<div class="t " style="top:498.70px;line-height:10px;left:841.30px;font-size:7.8px;">au</div>
<div class="in " style="left:852.30px;top:495.60px;width:46.20px;height:14.8px;line-height:12.8px;font-size:8px;text-align:center;padding:0"><span style="position:relative;top:1.00px">31/10/2011</span></div>
<svg class="abs" style="left:904px;top:498.5px" width="9" height="9" viewBox="0 0 9 9"><rect x="0.5" y="0.8" width="8" height="7.4" rx="1" fill="#f1efe9"/><circle cx="3" cy="5.5" r="2" fill="#f0e4c4"/><circle cx="5.8" cy="4.2" r="2.2" fill="#eee0bd"/><circle cx="5.3" cy="6.6" r="1.6" fill="#f3d9a0"/></svg>
<div class="cb" style="left:700.20px;top:514.90px;width:8px;height:8px;"><svg width="8" height="8" viewBox="0 0 8 8" style="position:absolute;left:-1px;top:-1px"><path d="M2 4.2L3.6 5.9L6.3 1.9" fill="none" stroke="#2a4f9a" stroke-width="1.2"/></svg></div>
<div class="t " style="top:514.90px;line-height:10px;left:712.60px;font-size:7.8px;">Détail par personne</div>
<div class="cb" style="left:700.20px;top:531.20px;width:8px;height:8px;"><svg width="8" height="8" viewBox="0 0 8 8" style="position:absolute;left:-1px;top:-1px"><path d="M2 4.2L3.6 5.9L6.3 1.9" fill="none" stroke="#2a4f9a" stroke-width="1.2"/></svg></div>
<div class="t " style="top:531.20px;line-height:10px;left:712.60px;font-size:7.8px;">Détail par catégorie de frais</div>
<div class="t " style="top:549.40px;line-height:10px;left:701.00px;font-size:7.8px;">Refacturer</div>
<div class="in " style="left:739.30px;top:546.30px;width:33.30px;height:14.8px;line-height:12.8px;font-size:7.5px;text-align:right;padding:0 3px 0 0"><span style="position:relative;top:1.00px">100.0<span style="color:#999;font-size:7px;margin-left:1px">%</span></span></div>
<div class="t " style="top:549.40px;line-height:10px;left:775.70px;font-size:7.8px;">des frais réels +</div>
<div class="cb" style="left:835.60px;top:549.40px;width:8px;height:8px;"><svg width="8" height="8" viewBox="0 0 8 8" style="position:absolute;left:-1px;top:-1px"><path d="M2 4.2L3.6 5.9L6.3 1.9" fill="none" stroke="#2a4f9a" stroke-width="1.2"/></svg></div>
<div class="t " style="top:549.40px;line-height:10px;left:848.00px;font-size:7.8px;">Soumettre à TVA</div>
<div class="btn" style="left:727px;top:574.7px;width:78px;height:13.8px;line-height:11.8px;font-size:8px;padding-top:0.3px">Facturer le projet</div>
<div class="btn" style="left:812.3px;top:574.7px;width:42px;height:13.8px;line-height:11.8px;font-size:8px;padding-top:0.3px">Annuler</div>

</div>
</body>
</html>
